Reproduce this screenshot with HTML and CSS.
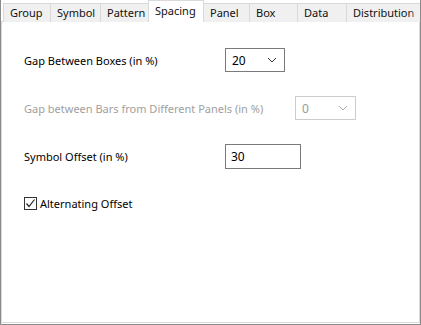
FILE: index.html
```html
<!DOCTYPE html>
<html lang="en">
<head>
    <meta charset="UTF-8">
    <title>Spacing</title>
    <link rel="stylesheet" href="styles.css">
</head>
<body>
    <div class="dialog">
        <div class="tabs">
            <div class="tab" style="width: 47px">Group</div>
            <div class="tab" style="width: 50px">Symbol</div>
            <div class="tab" style="width: 48px">Pattern</div>
            <div class="tab active" style="width: 56px">Spacing</div>
            <div class="tab" style="width: 45px">Panel</div>
            <div class="tab" style="width: 48px">Box</div>
            <div class="tab" style="width: 49px">Data</div>
            <div class="tab last" style="width: 76px">Distribution</div>
        </div>
        <div class="panel">
            <div class="row first">
                <span class="label">Gap Between Boxes (in %)</span>
                <div class="combo">
                    <span>20</span>
                    <svg width="10" height="6" viewBox="0 0 10 6"><path d="M1 1 L5 5 L9 1" fill="none" stroke="#333" stroke-width="1"/></svg>
                </div>
            </div>
            <div class="row">
                <span class="label wide disabled">Gap between Bars from Different Panels (in %)</span>
                <div class="combo off">
                    <span>0</span>
                    <svg width="10" height="6" viewBox="0 0 10 6"><path d="M1 1 L5 5 L9 1" fill="none" stroke="#aaa" stroke-width="1"/></svg>
                </div>
            </div>
            <div class="row">
                <span class="label">Symbol Offset (in %)</span>
                <div class="textbox">30</div>
            </div>
            <div class="check-row">
                <span class="checkbox">
                    <svg width="11" height="11" viewBox="0 0 11 11"><path d="M1.5 5.5 L4 8.5 L9.5 1.5" fill="none" stroke="#222" stroke-width="1.2"/></svg>
                </span>
                <span>Alternating Offset</span>
            </div>
        </div>
    </div>
</body>
</html>
```

FILE: styles.css
```css
body {
    margin: 0;
    background-color: white;
    font-family: "Noto Sans", Arial, sans-serif;
    font-size: 11px;
    color: #000;
}
.dialog {
    width: 421px;
    height: 325px;
    border-left: 1px solid #8a8a8a;
    border-right: 1px solid #8a8a8a;
    border-bottom: 1px solid #8a8a8a;
    box-sizing: border-box;
    overflow: hidden;
}
.tabs {
    display: flex;
    align-items: flex-end;
    height: 22px;
    padding-left: 2px;
    position: relative;
    z-index: 1;
    overflow: hidden;
}
.tab {
    height: 19px;
    line-height: 18px;
    box-sizing: border-box;
    padding-left: 6px;
    background-color: #f0f0f0;
    border: 1px solid #d9d9d9;
    border-bottom: none;
    border-right: none;
    white-space: nowrap;
    overflow: hidden;
    flex-shrink: 0;
    color: #111;
}
.tab.active {
    height: 22px;
    line-height: 19px;
    background-color: white;
    border-right: 1px solid #d9d9d9;
}
.tab.active + .tab {
    border-left: none;
}
.tab.last {
    position: relative;
}
/* the clipped tab fades out at the edge */
.tab.last::after {
    content: "";
    position: absolute;
    top: 0;
    right: 0;
    width: 14px;
    height: 100%;
    background: linear-gradient(to right, rgba(240,240,240,0), rgba(240,240,240,0.85));
}
.panel {
    height: 302px;
    margin-top: -1px;
    border: 1px solid #d9d9d9;
    background-color: white;
    padding: 26px 0 0 22px;
    box-sizing: border-box;
}
.row {
    display: flex;
    align-items: center;
    height: 24px;
    margin-bottom: 24px;
}
.label {
    width: 201px;
    flex-shrink: 0;
    white-space: nowrap;
}
.label.wide {
    width: 271px;
}
.disabled {
    color: #a0a0a0;
}
.combo {
    width: 60px;
    height: 24px;
    box-sizing: border-box;
    border: 1px solid #7a7a7a;
    display: flex;
    align-items: center;
    justify-content: space-between;
    padding: 0 7px 0 6px;
    font-size: 12px;
}
.combo.off {
    border-color: #cccccc;
    color: #999;
    width: 61px;
}
.textbox {
    width: 76px;
    height: 25px;
    box-sizing: border-box;
    border: 1px solid #7a7a7a;
    padding: 3px 0 0 5px;
    font-size: 12px;
}
.check-row {
    display: flex;
    align-items: center;
    height: 16px;
    margin-top: 27px;
}
.checkbox {
    width: 13px;
    height: 13px;
    box-sizing: border-box;
    border: 1px solid #333;
    margin-right: 3px;
    display: flex;
    align-items: center;
    justify-content: center;
}
```
